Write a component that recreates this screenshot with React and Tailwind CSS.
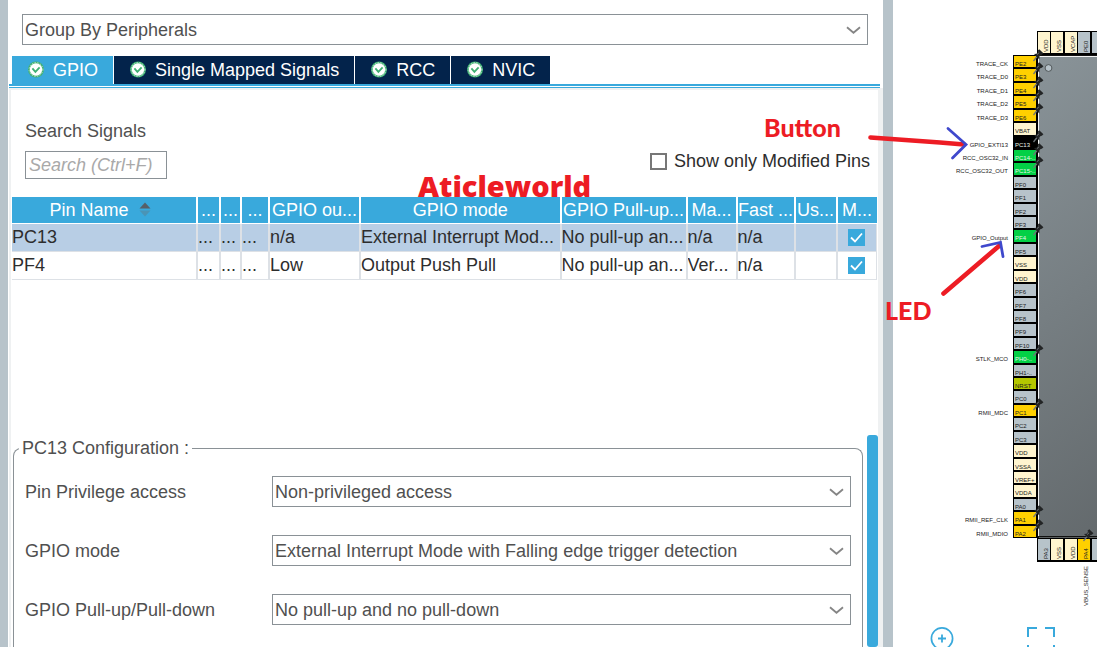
import React, { useState } from "react";

const TABS = ["GPIO", "Single Mapped Signals", "RCC", "NVIC"];

const COLUMNS = [
  { label: "Pin Name", width: "w-[185px]", sort: true },
  { label: "...", width: "w-[23px]" },
  { label: "...", width: "w-[21px]" },
  { label: "...", width: "w-[28px]" },
  { label: "GPIO ou...", width: "w-[91px]" },
  { label: "GPIO mode", width: "" },
  { label: "GPIO Pull-up...", width: "w-[126px]" },
  { label: "Ma...", width: "w-[50px]" },
  { label: "Fast ...", width: "w-[58px]" },
  { label: "Us...", width: "w-[42px]" },
  { label: "M...", width: "w-[40px]" },
];

const ROWS = [
  ["PC13", "...", "...", "...", "n/a", "External Interrupt Mod...", "No pull-up an...", "n/a", "n/a", ""],
  ["PF4", "...", "...", "...", "Low", "Output Push Pull", "No pull-up an...", "Ver...", "n/a", ""],
];

const SETTINGS = [
  { id: "privilege", label: "Pin Privilege access", value: "Non-privileged access" },
  { id: "mode", label: "GPIO mode", value: "External Interrupt Mode with Falling edge trigger detection" },
  { id: "pull", label: "GPIO Pull-up/Pull-down", value: "No pull-up and no pull-down" },
];

const IO = "#b7c3ca";
const PWR = "#fff5cf";
const SET = "#ffd000";
const ON = "#03d046";

// [name, fill, signal]
const LEFT_PINS = [
  ["PE2", SET, "TRACE_CK"],
  ["PE3", SET, "TRACE_D0"],
  ["PE4", SET, "TRACE_D1"],
  ["PE5", SET, "TRACE_D2"],
  ["PE6", SET, "TRACE_D3"],
  ["VBAT", PWR],
  ["PC13", "#000", "GPIO_EXTI13"],
  ["PC14-..", ON, "RCC_OSC32_IN"],
  ["PC15-..", ON, "RCC_OSC32_OUT"],
  ["PF0", IO],
  ["PF1", IO],
  ["PF2", IO],
  ["PF3", IO],
  ["PF4", ON, "GPIO_Output"],
  ["PF5", IO],
  ["VSS", PWR],
  ["VDD", PWR],
  ["PF6", IO],
  ["PF7", IO],
  ["PF8", IO],
  ["PF9", IO],
  ["PF10", IO],
  ["PH0-..", ON, "STLK_MCO"],
  ["PH1-..", IO],
  ["NRST", "#b5c800"],
  ["PC0", IO],
  ["PC1", SET, "RMII_MDC"],
  ["PC2", IO],
  ["PC3", IO],
  ["VDD", PWR],
  ["VSSA", PWR],
  ["VREF+", PWR],
  ["VDDA", PWR],
  ["PA0", IO],
  ["PA1", SET, "RMII_REF_CLK"],
  ["PA2", SET, "RMII_MDIO"],
];

const TOP_PINS = [["VDD", PWR], ["VSS", PWR], ["VCAP", PWR], ["PE0", IO], ["PE1", IO]];
const BOTTOM_PINS = [["PA3", IO], ["VSS", PWR], ["VDD", PWR], ["PA4", SET, "VBUS_SENSE"], ["PA5", IO]];

const PITCH = 483 / 36;

const CheckBadge = () => (
  <svg className="-mt-px" width="16" height="17" viewBox="0 0 16 17" aria-hidden="true">
    <circle cx="8" cy="8.5" r="8" fill="#3fb072" />
    <circle cx="8" cy="8.5" r="6.9" fill="none" stroke="#b5e2c8" strokeWidth="1" strokeDasharray="1.4 1.4" />
    <circle cx="8" cy="8.5" r="6.2" fill="#fff" />
    <path d="M4.4 7.4 L7.4 10.8 L11.6 6.4" fill="none" stroke="#3fb072" strokeWidth="1.8" />
  </svg>
);

const Chevron = () => (
  <svg
    className="pointer-events-none absolute right-[7px] top-3"
    width="15"
    height="9"
    viewBox="0 0 15 9"
    aria-hidden="true"
  >
    <path d="M1 1.2 L7.5 6.8 L14 1.2" fill="none" stroke="#858585" strokeWidth="1.8" />
  </svg>
);

const Combo = ({ id, value, label }) => (
  <div className="relative">
    <select
      id={id}
      aria-label={label}
      className="block h-[31px] w-full appearance-none border border-[#8a9196] bg-white pl-[2px] pr-8 pt-px text-lg leading-6 text-[#505050]"
    >
      <option>{value}</option>
    </select>
    <Chevron />
  </div>
);

const PushPin = ({ x, y }) => (
  <g transform={`translate(${x} ${y})`}>
    <path d="M-4.5 6 L-1 1.5" stroke="#6d7478" strokeWidth="1.3" />
    <path d="M-4 -1 L-1.5 -1.2 L0 -3 L-0.4 -4.6 L4.2 -0.4 L2.6 0 L1.4 1.6 L1.4 4.6 Z" fill="#222425" />
    <path d="M0.4 -5 L4.6 -1" stroke="#222425" strokeWidth="2.4" />
    <path d="M-1 -0.4 L1 -2.2" stroke="#82888b" strokeWidth="0.8" />
  </g>
);

const VerticalPin = ({ name, fill, x, y }) => (
  <g>
    <rect x={x} y={y} width="14" height="24" fill="#000" />
    <rect x={x + 1} y={y + 1} width="12" height="21" fill={fill} />
    <text transform={`translate(${x + 11} ${y + 21}) rotate(-90)`} fill="#222">
      {name}
    </text>
  </g>
);

const Chip = () => (
  <svg
    className="block shrink-0"
    width="204"
    height="620"
    viewBox="0 0 204 620"
    fontFamily="'Liberation Sans', sans-serif"
    fontSize="6"
    role="img"
    aria-label="Pinout"
  >
    <defs>
      <linearGradient id="body" gradientUnits="userSpaceOnUse" x1="145" y1="57" x2="400" y2="400">
        <stop offset="0" stopColor="#899398" />
        <stop offset="1" stopColor="#63696c" />
      </linearGradient>
    </defs>
    <rect x="144" y="55" width="60" height="484" fill="#111" />
    <rect x="145" y="57" width="59" height="479" fill="url(#body)" />
    <path d="M145.5 536 V56.5 H204" fill="none" stroke="#f4f5f5" />
    <path d="M146 537.5 H204" stroke="#8d9396" strokeWidth="0.6" />
    <circle cx="155.5" cy="68" r="3.4" fill="#b7c3ca" stroke="#3c4143" strokeWidth="0.8" />

    {TOP_PINS.map(([name, fill], i) => (
      <VerticalPin key={i} name={name} fill={fill} x={144 + Math.round(i * PITCH)} y={31} />
    ))}
    {BOTTOM_PINS.map(([name, fill], i) => (
      <VerticalPin key={i} name={name} fill={fill} x={144 + Math.round(i * PITCH)} y={538} />
    ))}
    <text transform="translate(195 606) rotate(-90)" fill="#222">
      VBUS_SENSE
    </text>

    {LEFT_PINS.map(([name, fill, signal], i) => {
      const y = 55 + Math.round(i * PITCH);
      const h = 55 + Math.round((i + 1) * PITCH) - y;
      return (
        <g key={i}>
          <rect x="120" y={y} width="25" height={h} fill="#000" />
          <rect x="121" y={y + 1} width="22" height={h - 2} fill={fill} />
          <text x="122" y={y + 11} fill={fill === ON || fill === "#000" ? "#e9f5ec" : "#222"}>
            {name}
          </text>
          {signal && (
            <text x="115" y={y + 11} textAnchor="end" fill="#222">
              {signal}
            </text>
          )}
        </g>
      );
    })}
    {LEFT_PINS.map(
      ([name, , signal], i) =>
        signal && <PushPin key={name} x={145} y={55 + Math.round(i * PITCH)} />
    )}
    <PushPin x={195} y={535} />
  </svg>
);

const PinTable = () => (
  <table className="w-full table-fixed border-collapse text-lg leading-6">
    <thead>
      <tr className="h-[26px] bg-[#39a9dc] text-white">
        {COLUMNS.map((col, i) => (
          <th
            key={i}
            className={`${col.width} overflow-hidden whitespace-nowrap border-b border-r-2 border-white p-0 pt-px text-center font-normal last:border-r-0`}
          >
            {col.label}
            {col.sort && (
              <svg className="mb-1 ml-[10px] mr-2 inline-block" width="12" height="15" viewBox="0 0 12 15" aria-hidden="true">
                <path d="M0.5 6.5 L6 0.5 L11.5 6.5 Z" fill="#566069" />
                <path d="M0.5 8.5 L6 14.5 L11.5 8.5 Z" fill="#4a94b6" />
              </svg>
            )}
          </th>
        ))}
      </tr>
    </thead>
    <tbody>
      {ROWS.map((row, r) => (
        <tr key={row[0]} className={`h-[28px] text-[#2d2d2d] ${r === 0 ? "bg-[#b8cee5]" : "bg-white"}`}>
          {row.map((cell, i) => (
            <td key={i} className="overflow-hidden whitespace-nowrap border-b border-r-2 border-[#dde1e6] p-0">
              {cell}
            </td>
          ))}
          <td className="border-b border-r border-[#dde1e6] p-0">
            <label className="relative mx-auto block h-[17px] w-[17px]">
              <input
                type="checkbox"
                defaultChecked
                aria-label={`${row[0]} modified`}
                className="block h-[17px] w-[17px] appearance-none bg-[#9bd3ec] checked:bg-[#39a9dc]"
              />
              <svg className="pointer-events-none absolute inset-0" width="17" height="17" viewBox="0 0 17 17" aria-hidden="true">
                <path d="M3 8.5 L7 12.5 L14 4.5" fill="none" stroke="#fff" strokeWidth="1.8" />
              </svg>
            </label>
          </td>
        </tr>
      ))}
    </tbody>
  </table>
);

export default function App() {
  const [active, setActive] = useState("GPIO");

  return (
    <div className="flex h-screen overflow-hidden bg-white font-['Liberation_Sans',sans-serif] text-lg text-[#505050]">
      <div className="w-2 shrink-0 bg-[#b7c3ca]" />

      <main className="flex min-w-0 flex-1 flex-col">
        <div className="ml-[14px] mr-[15px] mt-[14px]">
          <Combo id="group" label="Grouping" value="Group By Peripherals" />
        </div>

        <nav className="ml-1 mt-[11px] flex gap-px">
          {TABS.map((tab) => (
            <button
              key={tab}
              type="button"
              onClick={() => setActive(tab)}
              className={`flex h-7 items-center gap-[9px] pl-4 pr-[15px] leading-7 text-white ${
                active === tab ? "bg-[#39a9dc]" : "bg-[#03234b]"
              }`}
            >
              <CheckBadge />
              {tab}
            </button>
          ))}
        </nav>
        <div className="ml-px mr-[3px] h-1 shrink-0 border-b border-t-2 border-[#39a9dc]" />

        <div className="ml-px flex min-h-0 flex-1 flex-col border-l-2 border-r-[5px] border-t-2 border-[#eff1f2]">
          <div className="flex items-end justify-between pl-[14px] pr-2 pt-[31px]">
            <div>
              <label htmlFor="search" className="block leading-5">
                Search Signals
              </label>
              <input
                id="search"
                type="text"
                placeholder="Search (Ctrl+F)"
                className="mt-[10px] block h-7 w-[142px] border border-[#8a9196] px-[3px] pt-px leading-6 placeholder:italic placeholder:text-[#a9a9a9]"
              />
            </div>
            <label className="flex items-center gap-[7px] pb-2 leading-5 text-[#2d2d2d]">
              <input type="checkbox" className="h-[17px] w-[17px] appearance-none border-2 border-[#777777] bg-white" />
              Show only Modified Pins
            </label>
          </div>

          <div className="relative mt-[18px] h-[238px] shrink-0 px-px">
            <PinTable />
            <span className="pointer-events-none absolute left-[407px] top-[-25px] font-['Open_Sans',sans-serif] text-[29px] font-extrabold leading-7 text-[#ed1c24]">
              Aticleworld
            </span>
          </div>

          <div className="flex min-h-0 flex-1 pl-[2px]">
            <fieldset className="mt-[3px] min-w-0 flex-1 rounded-t-lg border border-b-0 border-[#8a9196]">
              <legend className="ml-[5px] px-[3px] leading-5">PC13 Configuration :</legend>
              <div className="grid grid-cols-[247px_1fr] items-center gap-y-7 pl-[11px] pr-[11px] pt-[18px]">
                {SETTINGS.map((s) => (
                  <React.Fragment key={s.id}>
                    <label htmlFor={s.id}>{s.label}</label>
                    <Combo id={s.id} value={s.value} />
                  </React.Fragment>
                ))}
              </div>
            </fieldset>
            <div className="ml-1 w-[11px] rounded-[3px] bg-[#39a9dc]" />
          </div>
        </div>
      </main>

      <div className="w-[10px] shrink-0 bg-[#b7c3ca]" />

      <aside className="relative flex w-[204px] shrink-0 flex-col">
        <Chip />
        <div className="flex gap-[73px] pl-[37px] pt-[7px] text-[#39a9dc]">
          <button type="button" aria-label="Zoom in">
            <svg width="24" height="28" viewBox="0 0 24 28" fill="none" stroke="currentColor">
              <circle cx="12" cy="11.5" r="10.6" strokeWidth="1.7" />
              <path d="M12 7.5 V15.5 M8 11.5 H16" strokeWidth="1.8" />
            </svg>
          </button>
          <button type="button" aria-label="Fit">
            <svg width="28" height="28" viewBox="0 0 28 28" fill="none" stroke="currentColor" strokeWidth="2">
              <path d="M1 10 V1 H10 M18 1 H27 V10 M1 18 V27 H10 M18 27 H27 V18" />
            </svg>
          </button>
        </div>

        {/* callouts */}
        <svg
          className="pointer-events-none absolute left-[-33px] top-0"
          width="160"
          height="320"
          viewBox="860 0 160 320"
          fill="none"
          strokeLinecap="round"
          aria-hidden="true"
        >
          <path d="M870.5 137.5 L940 142.5 L964 144.5" stroke="#ed1c24" strokeWidth="4.6" />
          <path d="M948 128.5 L966 144.5 L952.5 158" stroke="#3f48cc" strokeWidth="2.8" />
          <path d="M943.5 293.5 L999 246" stroke="#ed1c24" strokeWidth="4.6" />
          <path d="M982 246.5 L1000.5 242.5 L1003 256.5" stroke="#3f48cc" strokeWidth="2.8" />
        </svg>
        <span className="pointer-events-none absolute left-[-129px] top-[111px] font-[Lato,sans-serif] text-[25px] font-black leading-8 text-[#ed1c24]">
          Button
        </span>
        <span className="pointer-events-none absolute left-[-8px] top-[294px] font-[Lato,sans-serif] text-[25px] font-black leading-8 text-[#ed1c24]">
          LED
        </span>
      </aside>
    </div>
  );
}
